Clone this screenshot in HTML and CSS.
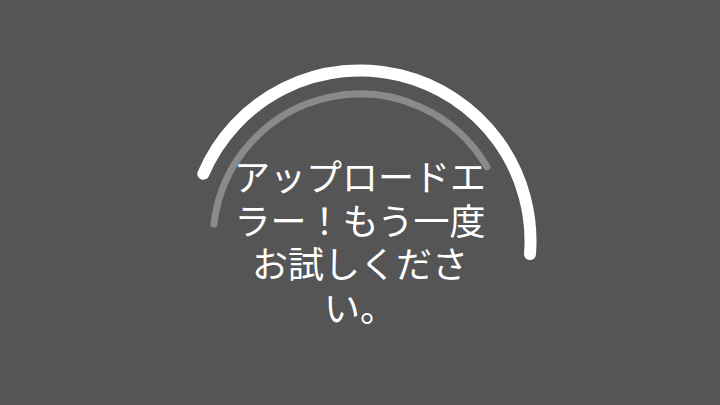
FILE: index.html
```html
<!DOCTYPE html>
<html lang="ja">
<head>
<meta charset="utf-8">
<title>アップロードエラー</title>
<link rel="stylesheet" href="styles.css">
</head>
<body>
<main class="screen">
  <div class="dial">
    <svg class="rings" viewBox="0 0 360 360" width="360" height="360" aria-hidden="true">
      <path class="ring-track" d="M 33.97 163.1 A 147 147 0 0 1 306.9 105.8"/>
      <path class="ring-main" d="M 23.3 112.8 A 170.5 170.5 0 0 1 350.0 193.1"/>
    </svg>
    <p class="message">アップロードエラー！もう一度お試しください。</p>
  </div>
</main>
</body>
</html>
```
FILE: styles.css
```css
html, body {
  margin: 0;
  padding: 0;
}
body {
  background: #555555;
  overflow: hidden;
}
.screen {
  width: 720px;
  height: 405px;
  display: flex;
  justify-content: center;
  align-items: flex-start;
  padding-top: 61px;
  box-sizing: border-box;
  overflow: hidden;
}
.dial {
  position: relative;
  width: 360px;
  height: 360px;
  flex: none;
  display: flex;
  align-items: center;
  justify-content: center;
}
.rings {
  position: absolute;
  left: 0;
  top: 0;
}
.ring-main {
  fill: none;
  stroke: #ffffff;
  stroke-width: 12;
  stroke-linecap: round;
}
.ring-track {
  fill: none;
  stroke: #8a8a8a;
  stroke-width: 7;
  stroke-linecap: round;
}
.message {
  position: relative;
  margin: 0;
  width: 262px;
  text-align: center;
  color: #ffffff;
  font-family: "Noto Sans CJK JP", "Noto Sans", sans-serif;
  font-size: 36px;
  line-height: 43.5px;
  line-break: strict;
}
```
